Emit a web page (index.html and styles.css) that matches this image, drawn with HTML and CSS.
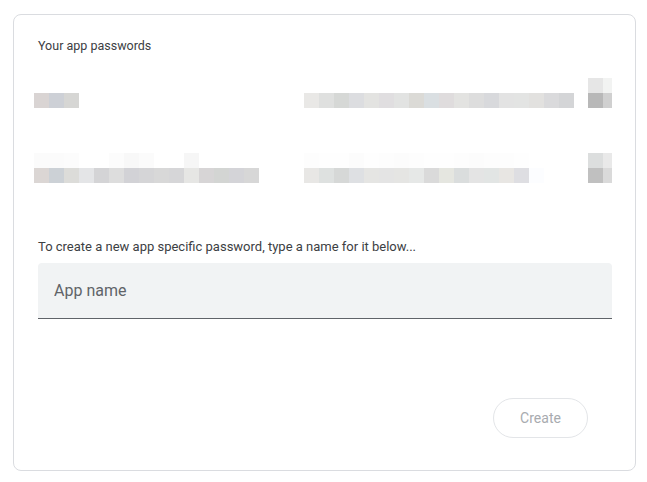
FILE: index.html
```html
<!DOCTYPE html>
<html lang="en">
<head>
    <meta charset="UTF-8">
    <meta name="viewport" content="width=device-width, initial-scale=1.0">
    <title>App passwords</title>
    <link rel="stylesheet" href="styles.css">
</head>
<body>
    <section class="card">
        <h2 class="card-title">Your app passwords</h2>

        <div class="pw-list">
            <!-- fila 1 -->
            <div class="pw-row">
                <div class="cell cell-name">
                    <div class="px-line"></div>
                    <div class="px-line">
                        <span style="background:#d9d4d3"></span><span style="background:#cdd0d6"></span><span style="background:#d6d6d4"></span>
                    </div>
                </div>
                <div class="cell cell-pass">
                    <div class="px-line"></div>
                    <div class="px-line">
                        <span style="background:#e9e8e6"></span><span style="background:#dfe0df"></span><span style="background:#d6d8d6"></span><span style="background:#dcdde0"></span><span style="background:#e3e3e1"></span><span style="background:#e0dee0"></span><span style="background:#e2e3e2"></span><span style="background:#dbdad6"></span><span style="background:#dadfe2"></span><span style="background:#dfdcdd"></span><span style="background:#e3e3e1"></span><span style="background:#dddddd"></span><span style="background:#d8d9dc"></span><span style="background:#e3e3e3"></span><span style="background:#e3e4e3"></span><span style="background:#e2e1df"></span><span style="background:#dadadc"></span><span style="background:#d4d5d7"></span>
                    </div>
                </div>
                <div class="cell cell-menu">
                    <div class="px-line">
                        <span style="background:#e6e6e6"></span><span class="half" style="background:#f2f3f2"></span>
                    </div>
                    <div class="px-line">
                        <span style="background:#b8b8b8"></span><span class="half" style="background:#d0d0d0"></span>
                    </div>
                </div>
            </div>

            <!-- fila 2 -->
            <div class="pw-row">
                <div class="cell cell-name">
                    <div class="px-line">
                        <span style="background:#fbfbfb"></span><span style="background:#fbfbfb"></span><span style="background:#fcfcfc"></span><span></span><span></span><span style="background:#fcfcfc"></span><span style="background:#f8f8f8"></span><span style="background:#fbfbfb"></span><span></span><span></span><span style="background:#f6f6f6"></span>
                    </div>
                    <div class="px-line">
                        <span style="background:#dbd6d4"></span><span style="background:#ccd1d6"></span><span style="background:#dcdcd9"></span><span style="background:#e4e5e7"></span><span style="background:#d4d4d6"></span><span style="background:#dddddd"></span><span style="background:#d2d2d6"></span><span style="background:#d5d5d7"></span><span style="background:#d8d8d8"></span><span style="background:#d6d6d8"></span><span style="background:#e6e6e4"></span><span style="background:#d7d5d6"></span><span style="background:#d3d5d3"></span><span style="background:#d4d4d8"></span><span style="background:#d7d7d7"></span>
                    </div>
                </div>
                <div class="cell cell-pass">
                    <div class="px-line">
                        <span style="background:#fdfdfd"></span><span style="background:#fefefe"></span><span style="background:#fefefe"></span><span style="background:#fcfcfc"></span><span style="background:#fefefe"></span><span style="background:#fdfdfd"></span><span style="background:#fcfcfc"></span><span style="background:#fdfdfd"></span><span style="background:#fefefe"></span><span style="background:#fefefe"></span><span style="background:#fdfdfd"></span><span style="background:#fcfcfc"></span><span style="background:#fdfdfd"></span><span style="background:#fdfdfd"></span><span style="background:#fefefe"></span>
                    </div>
                    <div class="px-line">
                        <span style="background:#e8e7e5"></span><span style="background:#dee1e0"></span><span style="background:#d6d8d7"></span><span style="background:#dee0e3"></span><span style="background:#e5e5e3"></span><span style="background:#e4e4e4"></span><span style="background:#e5e5e3"></span><span style="background:#e6e8e7"></span><span style="background:#dadada"></span><span style="background:#e5e6e0"></span><span style="background:#dadddd"></span><span style="background:#e4e4e4"></span><span style="background:#e2e5e4"></span><span style="background:#e8e6e3"></span><span style="background:#dedee2"></span><span style="background:#fcfdff"></span>
                    </div>
                </div>
                <div class="cell cell-menu">
                    <div class="px-line">
                        <span style="background:#dcdede"></span><span class="half" style="background:#e9e9e9"></span>
                    </div>
                    <div class="px-line">
                        <span style="background:#c0c0c0"></span><span class="half" style="background:#dadada"></span>
                    </div>
                </div>
            </div>
        </div>

        <p class="hint">To create a new app specific password, type a name for it below...</p>
        <input class="app-name" type="text" placeholder="App name">

        <div class="actions">
            <button class="btn-create" disabled>Create</button>
        </div>
    </section>
</body>
</html>
```

FILE: styles.css
```css
body {
    margin: 0;
    padding: 14px 11px 11px 13px;
    font-family: Roboto, "Liberation Sans", Arial, sans-serif;
    background: white;
    color: #3c4043;
}
.card {
    box-sizing: border-box;
    height: 457px;
    padding: 23px 23px 0 24px;
    border: 1px solid #dadce0;
    border-radius: 8px;
}
.card-title {
    margin: 0;
    font-size: 12.5px;
    font-weight: 400;
    line-height: 16px;
    color: #3c4043;
}
.pw-list {
    display: flex;
    flex-direction: column;
    gap: 45px;
    margin: 24px 0 0 -4px;
}
.pw-row {
    display: flex;
    height: 30px;
}
.cell {
    display: flex;
    flex-direction: column;
}
.cell-name {
    width: 270px;
}
.cell-pass {
    width: 285px;
}
.px-line {
    display: flex;
    height: 15px;
}
.px-line span {
    flex: none;
    width: 15px;
    height: 15px;
}
.px-line span.half {
    width: 9px;
}
.hint {
    margin: 56px 0 8px;
    font-size: 13px;
    line-height: 16px;
    color: #3c4043;
}
.app-name {
    display: block;
    box-sizing: border-box;
    width: 100%;
    height: 56px;
    margin: 0;
    padding: 0 16px;
    border: none;
    border-bottom: 1px solid #5f6368;
    border-radius: 4px 4px 0 0;
    background: #f1f3f4;
    font-family: inherit;
    font-size: 16px;
    color: #202124;
    outline: none;
}
.app-name::placeholder {
    color: #5f6368;
}
.actions {
    display: flex;
    justify-content: flex-end;
    margin-top: 79px;
    padding-right: 24px;
}
.btn-create {
    width: 95px;
    height: 40px;
    padding: 0;
    border: 1px solid #e3e5e8;
    border-radius: 20px;
    background: white;
    font-family: inherit;
    font-size: 14px;
    color: #a8abaf;
}
```
